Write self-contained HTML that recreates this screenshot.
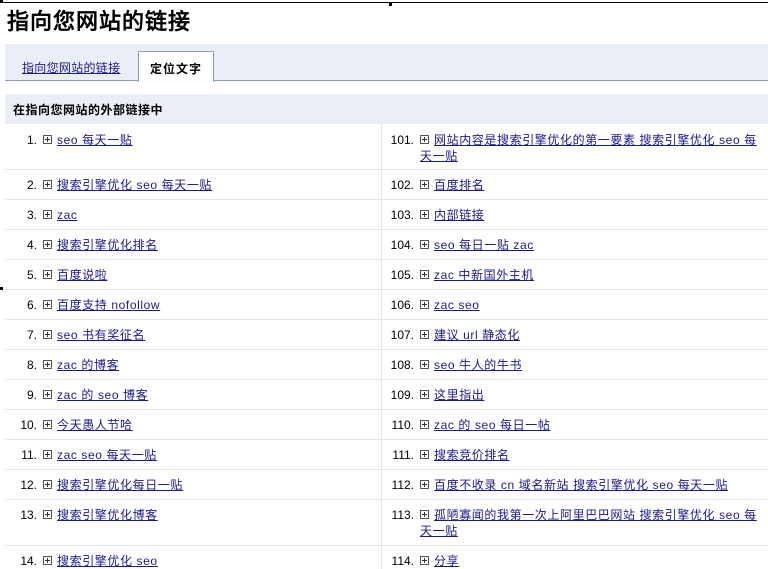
<!DOCTYPE html>
<html><head><meta charset="utf-8"><style>
*{margin:0;padding:0;box-sizing:border-box}
body{width:768px;height:569px;overflow:hidden;background:#fff;font-family:"Liberation Sans","Noto Sans CJK SC",sans-serif;font-size:12px;color:#000;position:relative}
.topline{position:absolute;left:0;top:2px;width:768px;height:1px;background:#000}
.sq{position:absolute;width:3px;height:3px;background:#000}
h1{position:absolute;left:7px;top:4px;font-size:22px;font-weight:bold;font-family:"Liberation Sans","WenQuanYi Zen Hei",sans-serif;letter-spacing:1px}
.tabbar{position:absolute;left:5px;top:44px;width:763px;height:37px;background:#e9eef7;border-bottom:1px solid #8c9cb4}
.tab1{position:absolute;left:22px;top:59px;color:#1a1a8c;text-decoration:underline;letter-spacing:0.3px}
.tab2{position:absolute;left:138px;top:51px;width:76px;height:31px;background:#fff;border:1px solid #8c9cb4;border-bottom:none;font-weight:bold;text-align:center;padding-top:8px;letter-spacing:1px}
.hdr{position:absolute;left:5px;top:94px;width:763px;height:30px;background:#e9eef7;font-weight:bold;padding:7px 0 0 8px;letter-spacing:0.5px}
.row{position:absolute;left:5px;width:763px;border-bottom:1px solid #e6e6e6}
.vd{position:absolute;left:381px;top:124px;width:1px;height:445px;background:#e6e6e6}
.c{position:absolute;line-height:16px;letter-spacing:0.6px;white-space:nowrap}
.n{position:absolute;text-align:right;line-height:16px}
a{color:#1a1a8c;text-decoration:underline}
.ic{position:absolute;width:9px;height:9px;border:1px solid #555}
.ic:before{content:"";position:absolute;left:1px;top:3px;width:5px;height:1px;background:#333}
.ic:after{content:"";position:absolute;left:3px;top:1px;width:1px;height:5px;background:#333}
</style></head><body>
<div class="topline"></div>
<div class="sq" style="left:0;top:0"></div>
<div class="sq" style="left:389px;top:3px"></div>
<div class="sq" style="left:0;top:287px"></div>
<h1>指向您网站的链接</h1>
<div class="tabbar"></div>
<a class="tab1">指向您网站的链接</a>
<div class="tab2">定位文字</div>
<div class="hdr">在指向您网站的外部链接中</div>
<div class="row" style="top:124px;height:46px"></div>
<div class="row" style="top:170px;height:30px"></div>
<div class="row" style="top:200px;height:30px"></div>
<div class="row" style="top:230px;height:30px"></div>
<div class="row" style="top:260px;height:30px"></div>
<div class="row" style="top:290px;height:30px"></div>
<div class="row" style="top:320px;height:30px"></div>
<div class="row" style="top:350px;height:30px"></div>
<div class="row" style="top:380px;height:30px"></div>
<div class="row" style="top:410px;height:30px"></div>
<div class="row" style="top:440px;height:30px"></div>
<div class="row" style="top:470px;height:30px"></div>
<div class="row" style="top:500px;height:46px"></div>
<div class="vd"></div>

<div class="n" style="left:0;width:37px;top:132px">1.</div><span class="ic" style="left:43px;top:135px"></span><div class="c" style="left:57px;top:132px"><a>seo 每天一贴</a></div>
<div class="n" style="left:0;width:37px;top:177px">2.</div><span class="ic" style="left:43px;top:180px"></span><div class="c" style="left:57px;top:177px"><a>搜索引擎优化 seo 每天一贴</a></div>
<div class="n" style="left:0;width:37px;top:207px">3.</div><span class="ic" style="left:43px;top:210px"></span><div class="c" style="left:57px;top:207px"><a>zac</a></div>
<div class="n" style="left:0;width:37px;top:237px">4.</div><span class="ic" style="left:43px;top:240px"></span><div class="c" style="left:57px;top:237px"><a>搜索引擎优化排名</a></div>
<div class="n" style="left:0;width:37px;top:267px">5.</div><span class="ic" style="left:43px;top:270px"></span><div class="c" style="left:57px;top:267px"><a>百度说啦</a></div>
<div class="n" style="left:0;width:37px;top:297px">6.</div><span class="ic" style="left:43px;top:300px"></span><div class="c" style="left:57px;top:297px"><a>百度支持 nofollow</a></div>
<div class="n" style="left:0;width:37px;top:327px">7.</div><span class="ic" style="left:43px;top:330px"></span><div class="c" style="left:57px;top:327px"><a>seo 书有奖征名</a></div>
<div class="n" style="left:0;width:37px;top:357px">8.</div><span class="ic" style="left:43px;top:360px"></span><div class="c" style="left:57px;top:357px"><a>zac 的博客</a></div>
<div class="n" style="left:0;width:37px;top:387px">9.</div><span class="ic" style="left:43px;top:390px"></span><div class="c" style="left:57px;top:387px"><a>zac 的 seo 博客</a></div>
<div class="n" style="left:0;width:37px;top:417px">10.</div><span class="ic" style="left:43px;top:420px"></span><div class="c" style="left:57px;top:417px"><a>今天愚人节哈</a></div>
<div class="n" style="left:0;width:37px;top:447px">11.</div><span class="ic" style="left:43px;top:450px"></span><div class="c" style="left:57px;top:447px"><a>zac seo 每天一贴</a></div>
<div class="n" style="left:0;width:37px;top:477px">12.</div><span class="ic" style="left:43px;top:480px"></span><div class="c" style="left:57px;top:477px"><a>搜索引擎优化每日一贴</a></div>
<div class="n" style="left:0;width:37px;top:507px">13.</div><span class="ic" style="left:43px;top:510px"></span><div class="c" style="left:57px;top:507px"><a>搜索引擎优化博客</a></div>
<div class="n" style="left:0;width:37px;top:553px">14.</div><span class="ic" style="left:43px;top:556px"></span><div class="c" style="left:57px;top:553px"><a>搜索引擎优化 seo</a></div>

<div class="n" style="left:384px;width:30px;top:132px">101.</div><span class="ic" style="left:420px;top:135px"></span><div class="c" style="left:434px;top:132px"><a>网站内容是搜索引擎优化的第一要素 搜索引擎优化 seo 每</a></div><div class="c" style="left:420px;top:148px"><a>天一贴</a></div>
<div class="n" style="left:384px;width:30px;top:177px">102.</div><span class="ic" style="left:420px;top:180px"></span><div class="c" style="left:434px;top:177px"><a>百度排名</a></div>
<div class="n" style="left:384px;width:30px;top:207px">103.</div><span class="ic" style="left:420px;top:210px"></span><div class="c" style="left:434px;top:207px"><a>内部链接</a></div>
<div class="n" style="left:384px;width:30px;top:237px">104.</div><span class="ic" style="left:420px;top:240px"></span><div class="c" style="left:434px;top:237px"><a>seo 每日一贴 zac</a></div>
<div class="n" style="left:384px;width:30px;top:267px">105.</div><span class="ic" style="left:420px;top:270px"></span><div class="c" style="left:434px;top:267px"><a>zac 中新国外主机</a></div>
<div class="n" style="left:384px;width:30px;top:297px">106.</div><span class="ic" style="left:420px;top:300px"></span><div class="c" style="left:434px;top:297px"><a>zac seo</a></div>
<div class="n" style="left:384px;width:30px;top:327px">107.</div><span class="ic" style="left:420px;top:330px"></span><div class="c" style="left:434px;top:327px"><a>建议 url 静态化</a></div>
<div class="n" style="left:384px;width:30px;top:357px">108.</div><span class="ic" style="left:420px;top:360px"></span><div class="c" style="left:434px;top:357px"><a>seo 牛人的牛书</a></div>
<div class="n" style="left:384px;width:30px;top:387px">109.</div><span class="ic" style="left:420px;top:390px"></span><div class="c" style="left:434px;top:387px"><a>这里指出</a></div>
<div class="n" style="left:384px;width:30px;top:417px">110.</div><span class="ic" style="left:420px;top:420px"></span><div class="c" style="left:434px;top:417px"><a>zac 的 seo 每日一帖</a></div>
<div class="n" style="left:384px;width:30px;top:447px">111.</div><span class="ic" style="left:420px;top:450px"></span><div class="c" style="left:434px;top:447px"><a>搜索竞价排名</a></div>
<div class="n" style="left:384px;width:30px;top:477px">112.</div><span class="ic" style="left:420px;top:480px"></span><div class="c" style="left:434px;top:477px"><a>百度不收录 cn 域名新站 搜索引擎优化 seo 每天一贴</a></div>
<div class="n" style="left:384px;width:30px;top:507px">113.</div><span class="ic" style="left:420px;top:510px"></span><div class="c" style="left:434px;top:507px"><a>孤陋寡闻的我第一次上阿里巴巴网站 搜索引擎优化 seo 每</a></div><div class="c" style="left:420px;top:523px"><a>天一贴</a></div>
<div class="n" style="left:384px;width:30px;top:553px">114.</div><span class="ic" style="left:420px;top:556px"></span><div class="c" style="left:434px;top:553px"><a>分享</a></div>
</body></html>
